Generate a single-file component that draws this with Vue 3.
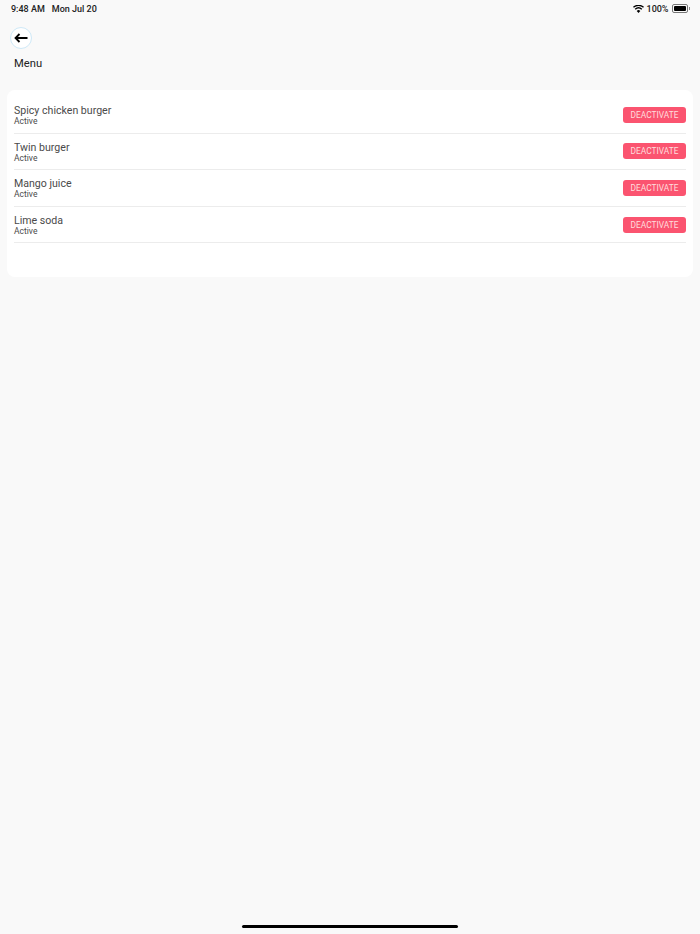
<template>
  <div class="screen">
    <div class="status">
      <div class="status-left">
        <span>9:48 AM</span>
        <span>Mon Jul 20</span>
      </div>
      <div class="status-right">
        <svg width="11" height="8" viewBox="0 0 11 8">
          <path d="M5.5 8 3.7 5.9a2.7 2.7 0 0 1 3.6 0Z" fill="#000" />
          <path d="M2.7 4.8 1.7 3.7a5.7 5.7 0 0 1 7.6 0L8.3 4.8a4.2 4.2 0 0 0-5.6 0Z" fill="#000" />
          <path d="M.9 2.8 0 1.8a8.2 8.2 0 0 1 11 0l-.9 1a6.9 6.9 0 0 0-9.2 0Z" fill="#000" />
        </svg>
        <span>100%</span>
        <div class="battery">
          <div class="battery-body"><div class="battery-fill"></div></div>
          <div class="battery-tip"></div>
        </div>
      </div>
    </div>

    <div class="back">
      <svg width="14" height="10" viewBox="0 0 14 10">
        <path d="M13.5 5H2M5.5 1 1.5 5l4 4" fill="none" stroke="#000" stroke-width="1.8" />
      </svg>
    </div>
    <h1 class="title">Menu</h1>

    <div class="card">
      <div class="row" v-for="item in items" :key="item">
        <div class="info">
          <div class="name">{{ item }}</div>
          <div class="state">Active</div>
        </div>
        <button class="btn">DEACTIVATE</button>
      </div>
    </div>

    <div class="home-bar"></div>
  </div>
</template>

<script setup>
const items = ["Spicy chicken burger", "Twin burger", "Mango juice", "Lime soda"];
</script>

<style>
html,
body {
  margin: 0;
  background: #f9f9f9;
}
</style>

<style scoped>
.screen {
  position: relative;
  height: 934px;
  background: #f9f9f9;
  font-family: Roboto, "Liberation Sans", sans-serif;
  color: #000;
  overflow: hidden;
}

.status {
  height: 17px;
  padding: 0 10px 0 11px;
  display: flex;
  justify-content: space-between;
  align-items: center;
  font-size: 9px;
  font-weight: 500;
  color: #222;
}

.status-left {
  display: flex;
  gap: 7px;
}

.status-right {
  display: flex;
  align-items: center;
  gap: 3px;
}

.battery {
  display: flex;
  align-items: center;
}

.battery-body {
  width: 12.5px;
  height: 5px;
  padding: 1px;
  border: 0.5px solid #777;
  border-radius: 2px;
}

.battery-fill {
  height: 100%;
  background: #000;
  border-radius: 1px;
}

.battery-tip {
  width: 1px;
  height: 3px;
  margin-left: 1px;
  background: #888;
}

.back {
  width: 20px;
  height: 20px;
  margin: 10px 0 0 10px;
  border: 1px solid #cfe9f7;
  border-radius: 50%;
  background: #fff;
  display: flex;
  align-items: center;
  justify-content: center;
}

.title {
  margin: 7px 0 0 14px;
  font-size: 11.2px;
  line-height: 15px;
  font-weight: 400;
  color: #222;
}

.card {
  margin: 19px 7px 0;
  height: 187px;
  box-sizing: border-box;
  padding: 7px 7px 0;
  background: #fff;
  border-radius: 8px;
}

.row {
  height: 36.6px;
  box-sizing: border-box;
  display: flex;
  align-items: center;
  justify-content: space-between;
  border-bottom: 1px solid #ececec;
}

.info {
  padding-top: 1px;
}

.name {
  font-size: 10.6px;
  line-height: 13px;
  color: #4a4a4a;
}

.state {
  font-size: 8.5px;
  line-height: 9px;
  color: #4a4a4a;
}

.btn {
  width: 63px;
  height: 16px;
  padding: 0;
  border: 0;
  border-radius: 3px;
  background: #fb5470;
  color: #fdd;
  font-family: inherit;
  font-size: 8.4px;
}

.home-bar {
  position: absolute;
  left: 242px;
  bottom: 6px;
  width: 216px;
  height: 3px;
  border-radius: 2px;
  background: #000;
}
</style>
